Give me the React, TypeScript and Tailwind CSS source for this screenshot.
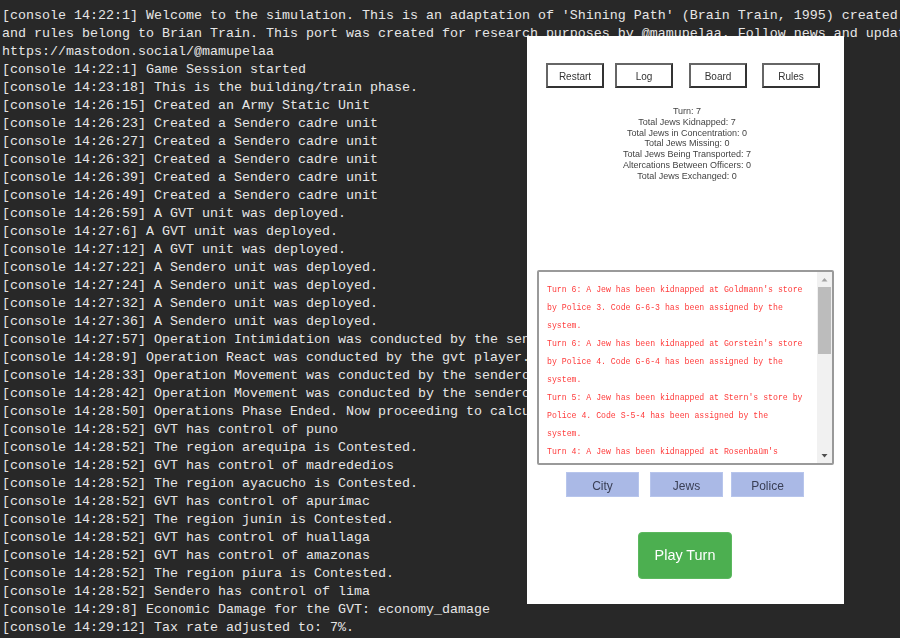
const LOG = [
  "[console 14:22:1] Welcome to the simulation. This is an adaptation of 'Shining Path' (Brain Train, 1995) created by",
  "and rules belong to Brian Train. This port was created for research purposes by @mamupelaa. Follow news and updates at",
  "https://mastodon.social/@mamupelaa",
  "[console 14:22:1] Game Session started",
  "[console 14:23:18] This is the building/train phase.",
  "[console 14:26:15] Created an Army Static Unit",
  "[console 14:26:23] Created a Sendero cadre unit",
  "[console 14:26:27] Created a Sendero cadre unit",
  "[console 14:26:32] Created a Sendero cadre unit",
  "[console 14:26:39] Created a Sendero cadre unit",
  "[console 14:26:49] Created a Sendero cadre unit",
  "[console 14:26:59] A GVT unit was deployed.",
  "[console 14:27:6] A GVT unit was deployed.",
  "[console 14:27:12] A GVT unit was deployed.",
  "[console 14:27:22] A Sendero unit was deployed.",
  "[console 14:27:24] A Sendero unit was deployed.",
  "[console 14:27:32] A Sendero unit was deployed.",
  "[console 14:27:36] A Sendero unit was deployed.",
  "[console 14:27:57] Operation Intimidation was conducted by the sendero player.",
  "[console 14:28:9] Operation React was conducted by the gvt player.",
  "[console 14:28:33] Operation Movement was conducted by the sendero player.",
  "[console 14:28:42] Operation Movement was conducted by the sendero player.",
  "[console 14:28:50] Operations Phase Ended. Now proceeding to calculate control.",
  "[console 14:28:52] GVT has control of puno",
  "[console 14:28:52] The region arequipa is Contested.",
  "[console 14:28:52] GVT has control of madrededios",
  "[console 14:28:52] The region ayacucho is Contested.",
  "[console 14:28:52] GVT has control of apurímac",
  "[console 14:28:52] The region junín is Contested.",
  "[console 14:28:52] GVT has control of huallaga",
  "[console 14:28:52] GVT has control of amazonas",
  "[console 14:28:52] The region piura is Contested.",
  "[console 14:28:52] Sendero has control of lima",
  "[console 14:29:8] Economic Damage for the GVT: economy_damage",
  "[console 14:29:12] Tax rate adjusted to: 7%.",
];

const STATS = [
  "Turn: 7",
  "Total Jews Kidnapped: 7",
  "Total Jews in Concentration: 0",
  "Total Jews Missing: 0",
  "Total Jews Being Transported: 7",
  "Altercations Between Officers: 0",
  "Total Jews Exchanged: 0",
];

const EVENTS = [
  "Turn 6: A Jew has been kidnapped at Goldmann's store by Police 3. Code G-6-3 has been assigned by the system.",
  "Turn 6: A Jew has been kidnapped at Gorstein's store by Police 4. Code G-6-4 has been assigned by the system.",
  "Turn 5: A Jew has been kidnapped at Stern's store by Police 4. Code S-5-4 has been assigned by the system.",
  "Turn 4: A Jew has been kidnapped at Rosenbaüm's",
];

function TopButton({ label, className }: { label: string; className: string }) {
  return (
    <button
      className={`h-[25px] w-[58px] border-2 border-solid border-t-[#666] border-l-[#666] border-r-[#333] border-b-[#333] bg-white pt-[2px] text-[10px] text-[#333] ${className}`}
    >
      {label}
    </button>
  );
}

function Tab({ label, className }: { label: string; className: string }) {
  return (
    <button className={`h-[25px] w-[73px] border border-[#b7c5ec] bg-[#aab9e6] pt-[2px] text-[12px] text-[#3a3f55] ${className}`}>
      {label}
    </button>
  );
}

export default function App() {
  return (
    <div className="relative h-[638px] w-[900px] overflow-hidden bg-[#282828] font-['Liberation_Sans',Arial,sans-serif]">
      <div className="whitespace-nowrap pl-[2px] pt-[7px] font-['Liberation_Mono',monospace] text-[13.33px] leading-[18px] text-[#e6e6e6]">
        {LOG.map((line, i) => (
          <div key={i}>{line}</div>
        ))}
      </div>

      <div className="absolute left-[527px] top-[36px] flex h-[568px] w-[317px] flex-col bg-white blur-[0.35px]">
        <div className="flex pl-[19px] pt-[27px]">
          <TopButton label="Restart" className="" />
          <TopButton label="Log" className="ml-[11px]" />
          <TopButton label="Board" className="ml-[16px]" />
          <TopButton label="Rules" className="ml-[15px]" />
        </div>

        <div className="mt-[18px] w-[320px] text-center text-[9px] leading-[10.75px] text-[#444]">
          {STATS.map((s) => (
            <div key={s}>{s}</div>
          ))}
        </div>

        <div className="ml-[10px] mt-[89px] flex h-[195px] w-[297px] overflow-hidden rounded-[2px] border-2 border-[#9a9a9a]">
          <div className="min-w-0 flex-1 overflow-hidden pl-[8px] pr-[12px] pt-[9px] font-['Liberation_Mono',monospace] text-[8.2px] leading-[18px] text-[#ff3b3b]">
            {EVENTS.map((e) => (
              <div key={e}>{e}</div>
            ))}
          </div>
          <div className="flex w-[15px] flex-col items-center bg-[#f1f1f1]">
            <svg width="15" height="15" viewBox="0 0 15 15" className="shrink-0">
              <path d="M4.5 9.5 L7.5 6 L10.5 9.5 Z" fill="#a3a3a3" />
            </svg>
            <div className="h-[67px] w-[13px] bg-[#bcbcbc]" />
            <div className="flex-1" />
            <svg width="15" height="15" viewBox="0 0 15 15" className="shrink-0">
              <path d="M4.5 6 L7.5 9.5 L10.5 6 Z" fill="#505050" />
            </svg>
          </div>
        </div>

        <div className="mt-[7px] flex pl-[39px]">
          <Tab label="City" className="" />
          <Tab label="Jews" className="ml-[11px]" />
          <Tab label="Police" className="ml-[8px]" />
        </div>

        <button className="ml-[111px] mt-[35px] h-[47px] w-[94px] rounded-[4px] border border-[#5cb85f] bg-[#4caf50] text-[14.4px] text-white">
          Play Turn
        </button>
      </div>
    </div>
  );
}
